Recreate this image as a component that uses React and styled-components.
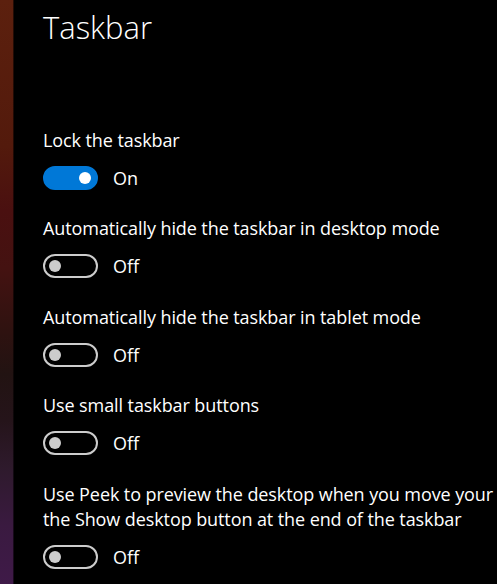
import React from "react";
import styled, { createGlobalStyle } from "styled-components";

const Global = createGlobalStyle`
  html, body { margin: 0; padding: 0; background: #000; }
  body { width: 497px; height: 584px; overflow: hidden; }
  #root { height: 584px; }
`;

const Page = styled.div`
  display: flex;
  height: 584px;
  width: 497px;
  overflow: hidden;
  background: #000;
  font-family: "Open Sans", "Noto Sans", sans-serif;
  color: #fff;
`;

const Strip = styled.div`
  flex: 0 0 13px;
  background: linear-gradient(
    to bottom,
    #5c200e 0%,
    #531a0c 25%,
    #4a1010 36%,
    #441211 46%,
    #2e1210 57%,
    #221312 64%,
    #25141a 72%,
    #2e1a2c 80%,
    #3a1a40 90%,
    #3f1a48 100%
  );
  border-right: 1px solid rgba(0, 0, 0, 0.6);
`;

const Content = styled.div`
  flex: 1;
  padding-left: 29px;
  min-width: 0;
`;

const Title = styled.h1`
  margin: 7px 0 0;
  font-size: 31px;
  font-weight: 300;
  line-height: 40px;
  color: #fff;
`;

const List = styled.div`
  display: flex;
  flex-direction: column;
  gap: 26.5px;
  margin-top: 80.5px;
`;

const Setting = styled.div`
  display: flex;
  flex-direction: column;
  gap: 13px;
`;

const Label = styled.div`
  font-size: 18px;
  line-height: 25px;
  letter-spacing: -0.09px;
  white-space: nowrap;
  color: #fff;
`;

const Row = styled.div`
  display: flex;
  align-items: center;
  gap: 15px;
  height: 24px;
`;

const Track = styled.div`
  box-sizing: border-box;
  width: 55px;
  height: 24px;
  border-radius: 12px;
  border: 2px solid ${(p) => (p.$on ? "#0078d7" : "#cccccc")};
  background: ${(p) => (p.$on ? "#0078d7" : "transparent")};
  display: flex;
  align-items: center;
  justify-content: ${(p) => (p.$on ? "flex-end" : "flex-start")};
  padding: 0 5px 0 4px;
`;

const Knob = styled.div`
  width: 12px;
  height: 12px;
  border-radius: 50%;
  background: ${(p) => (p.$on ? "#ffffff" : "#cccccc")};
`;

const State = styled.span`
  font-size: 18px;
  line-height: 24px;
  color: #fff;
`;

const settings = [
  { lines: ["Lock the taskbar"], on: true },
  { lines: ["Automatically hide the taskbar in desktop mode"], on: false },
  { lines: ["Automatically hide the taskbar in tablet mode"], on: false },
  { lines: ["Use small taskbar buttons"], on: false },
  {
    lines: [
      "Use Peek to preview the desktop when you move your",
      "the Show desktop button at the end of the taskbar",
    ],
    on: false,
  },
];

export default function App() {
  return (
    <Page>
      <Global />
      <Strip />
      <Content>
        <Title>Taskbar</Title>
        <List>
          {settings.map((s, i) => (
            <Setting key={i}>
              <div>
                {s.lines.map((l, j) => (
                  <Label key={j}>{l}</Label>
                ))}
              </div>
              <Row>
                <Track $on={s.on}>
                  <Knob $on={s.on} />
                </Track>
                <State>{s.on ? "On" : "Off"}</State>
              </Row>
            </Setting>
          ))}
        </List>
      </Content>
    </Page>
  );
}
